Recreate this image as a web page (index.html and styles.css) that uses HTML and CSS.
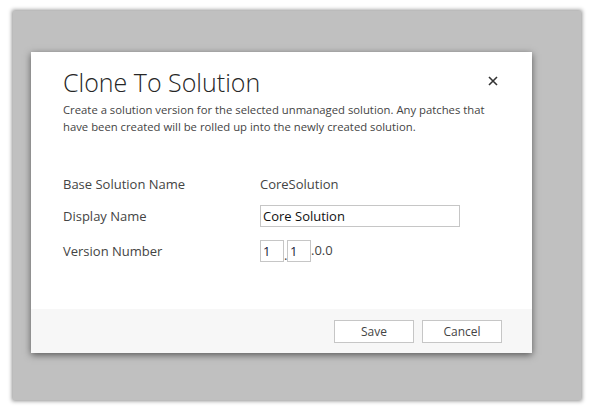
FILE: index.html
```html
<!DOCTYPE html>
<html>
<head>
<meta charset="utf-8">
<link rel="stylesheet" href="styles.css">
</head>
<body>
<div class="frame">
  <div class="dialog">
    <div class="content">
      <div class="header">
        <h1 class="title">Clone To Solution</h1>
        <span class="close" aria-label="Close">
          <svg width="10" height="10" viewBox="0 0 10 10"><path d="M1 1L9 9M9 1L1 9" stroke="#333" stroke-width="1.6" fill="none"/></svg>
        </span>
      </div>
      <p class="desc">Create a solution version for the selected unmanaged solution. Any patches that have been created will be rolled up into the newly created solution.</p>
      <div class="form">
        <div class="row">
          <span class="label">Base Solution Name</span>
          <span class="value">CoreSolution</span>
        </div>
        <div class="row">
          <span class="label">Display Name</span>
          <span class="input wide">Core Solution</span>
        </div>
        <div class="row">
          <span class="label">Version Number</span>
          <span class="version">
            <span class="input small">1</span><span class="dot">.</span><span class="input small">1</span><span class="rest">.0.0</span>
          </span>
        </div>
      </div>
    </div>
    <div class="footer">
      <button class="btn">Save</button>
      <button class="btn">Cancel</button>
    </div>
  </div>
</div>
</body>
</html>
```
FILE: styles.css
```css
html, body {
  margin: 0;
  padding: 0;
  background: #ffffff;
}
body {
  width: 594px;
  height: 412px;
  overflow: hidden;
  font-family: "Open Sans", "Noto Sans", sans-serif;
}
.frame {
  margin: 11px 0 0 13px;
  width: 568px;
  height: 389px;
  background: #c0c0c0;
  box-shadow: 0 0 4px 1px rgba(0, 0, 0, 0.45);
  padding-top: 41px;
  padding-left: 18px;
  box-sizing: border-box;
}
.dialog {
  width: 501px;
  height: 301px;
  background: #ffffff;
  box-shadow: 0 2px 7px rgba(0, 0, 0, 0.55);
  display: flex;
  flex-direction: column;
}
.content {
  flex: 1;
  padding: 13px 32px 0 32px;
}
.header {
  display: flex;
  justify-content: space-between;
  align-items: flex-start;
}
.title {
  margin: 0;
  font-size: 25px;
  font-weight: 300;
  line-height: 34px;
  color: #262626;
}
.close {
  margin-top: 11px;
  margin-right: 2px;
  width: 10px;
  height: 10px;
  display: block;
}
.close svg { display: block; }
.desc {
  margin: 2px 0 0 0;
  font-size: 11.3px;
  line-height: 17px;
  color: #444444;
  width: 440px;
}
.form {
  margin-top: 40px;
  display: flex;
  flex-direction: column;
}
.row {
  display: flex;
  align-items: center;
  font-size: 13px;
  color: #444444;
}
.row:nth-child(1) { height: 18px; }
.row:nth-child(2) { height: 22px; margin-top: 12px; }
.row:nth-child(3) { height: 22px; margin-top: 13px; }
.label {
  width: 197px;
  flex: none;
}
.value { color: #444444; }
.input {
  box-sizing: border-box;
  height: 22px;
  border: 1px solid #c6c6c6;
  display: flex;
  align-items: center;
  padding-left: 2px;
  color: #111111;
  background: #ffffff;
}
.input.wide { width: 200px; font-size: 13px; }
.input.small { width: 24px; font-size: 13px; color: #1a1a3a; }
.version {
  display: flex;
  align-items: center;
}
.dot { width: 3px; text-align: center; align-self: flex-end; line-height: 14px; }
.rest { margin-top: -3px; }
.footer {
  height: 44px;
  background: #f7f7f7;
  display: flex;
  justify-content: flex-end;
  align-items: center;
  gap: 8px;
  padding-right: 30px;
}
.btn {
  width: 80px;
  height: 23px;
  border: 1px solid #c6c6c6;
  background: #ffffff;
  font-family: "Open Sans", "Noto Sans", sans-serif;
  font-size: 12px;
  color: #444444;
  padding: 0;
  margin: 0;
}
```
